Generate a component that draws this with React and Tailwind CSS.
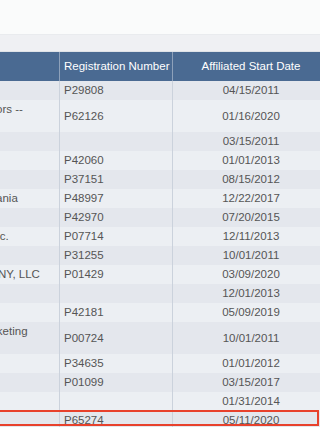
export default function App() {
  const rows = [
    { n: "Ameriprise Financial", r: "P29808", d: "04/15/2011" },
    { n: "Lincoln Financial Distributors -- Insurance Services", r: "P62126", d: "01/16/2020" },
    { n: "Edward Jones", r: "", d: "03/15/2011" },
    { n: "Raymond James", r: "P42060", d: "01/01/2013" },
    { n: "LPL Financial", r: "P37151", d: "08/15/2012" },
    { n: "Insurance Co of Pennsylvania", r: "P48997", d: "12/22/2017" },
    { n: "Wells Fargo", r: "P42970", d: "07/20/2015" },
    { n: "Cetera Financial Group, Inc.", r: "P07714", d: "12/11/2013" },
    { n: "Cambridge", r: "P31255", d: "10/01/2011" },
    { n: "First MetLife Securities of NY, LLC", r: "P01429", d: "03/09/2020" },
    { n: "UBS Financial", r: "", d: "12/01/2013" },
    { n: "Commonwealth", r: "P42181", d: "05/09/2019" },
    { n: "Transamerica Capital Marketing Group Services", r: "P00724", d: "10/01/2011" },
    { n: "Securian", r: "P34635", d: "01/01/2012" },
    { n: "Principal", r: "P01099", d: "03/15/2017" },
    { n: "Voya", r: "", d: "01/31/2014" },
    { n: "Nationwide", r: "P65274", d: "05/11/2020" },
  ];
  return (
    <div
      className="relative w-[320px] h-[427px] overflow-hidden bg-[#fafbfb]"
      style={{ fontFamily: '"Liberation Sans", Arial, sans-serif' }}
    >
      <div className="h-[34px] bg-[#fafbfb]" />
      <div className="h-[17px] bg-[#eff0f3] border-t border-[#e9ebee]" />
      <div className="ml-[-140px] w-[469px]">
        <div className="flex h-[30px] bg-[#4a6a92] text-white text-[11.5px] whitespace-nowrap border-t border-[#dfe3e8]">
          <div className="w-[200px] shrink-0 border-r border-[#8ea1ba]" />
          <div className="w-[113px] shrink-0 border-r border-[#8ea1ba] flex items-center px-[4px]">
            Registration Number
          </div>
          <div className="w-[156px] shrink-0 flex items-center justify-center">
            Affiliated Start Date
          </div>
        </div>
        {rows.map((row, i) => (
          <div
            key={i}
            className={`flex text-[11.5px] leading-[13px] text-[#555] ${
              i % 2 === 0 ? "bg-[#e4e7ed]" : "bg-[#eceff3]"
            }`}
          >
            <div className="w-[200px] shrink-0 border-r border-[#cbd2dc] px-[5px] py-[3px]">
              {row.n}
            </div>
            <div className="w-[113px] shrink-0 border-r border-[#cbd2dc] px-[4px] py-[3px] flex items-center">
              {row.r}
            </div>
            <div className="w-[156px] shrink-0 py-[3px] flex items-center justify-center">
              {row.d}
            </div>
          </div>
        ))}
      </div>
      <div className="absolute left-[-10px] top-[410px] w-[329px] h-[16px] border-2 border-[#e8412c]" />
    </div>
  );
}
